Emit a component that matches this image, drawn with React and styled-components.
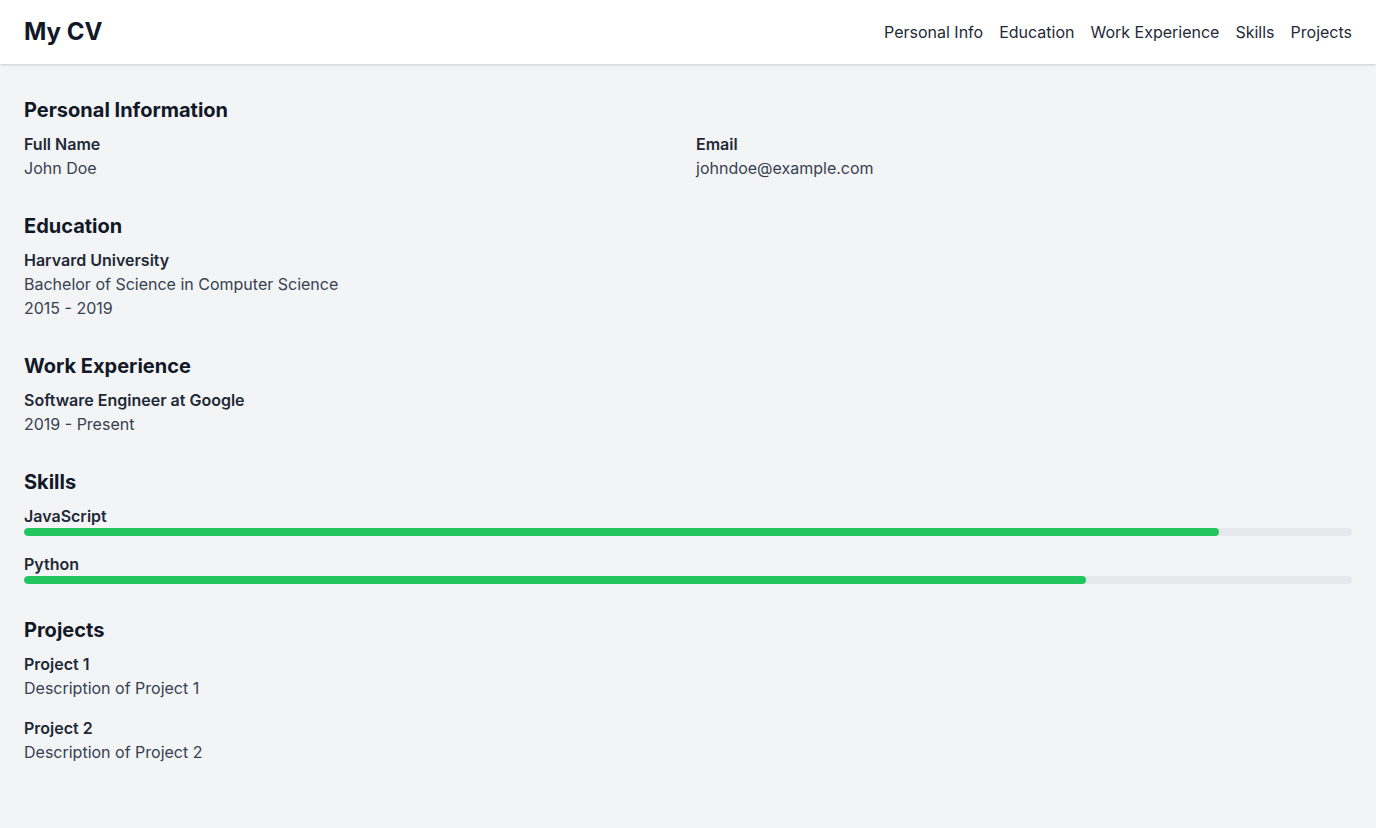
import styled, { createGlobalStyle } from "styled-components"

const GlobalStyle = createGlobalStyle`
  * {
    box-sizing: border-box;
  }
  body {
    margin: 0;
    background: #f3f4f6;
    font-family: Inter, "Noto Sans", sans-serif;
    color: #1f2937;
  }
`

const Page = styled.div`
  min-height: 100vh;
  background: #f3f4f6;
`

const Header = styled.header`
  height: 64px;
  background: #ffffff;
  box-shadow: 0 1px 3px rgba(0, 0, 0, 0.1), 0 1px 2px rgba(0, 0, 0, 0.06);
  display: flex;
  align-items: center;
  justify-content: space-between;
  padding: 0 24px;
`

const Logo = styled.h1`
  margin: 0;
  font-size: 24px;
  line-height: 32px;
  font-weight: 700;
  color: #111827;
`

const Nav = styled.nav`
  display: flex;
  gap: 16px;
`

const NavLink = styled.a`
  font-size: 16px;
  line-height: 24px;
  color: #1f2937;
  text-decoration: none;
  cursor: pointer;
`

const Main = styled.main`
  padding: 32px 24px;
`

const Section = styled.section`
  margin-bottom: 32px;
`

const SectionTitle = styled.h2`
  margin: 0 0 8px;
  font-size: 20px;
  line-height: 28px;
  font-weight: 700;
  color: #111827;
`

const Grid = styled.div`
  display: grid;
  grid-template-columns: 1fr 1fr;
  gap: 16px;
`

const Label = styled.div`
  font-size: 16px;
  line-height: 24px;
  font-weight: 600;
  color: #1f2937;
`

const Text = styled.div`
  font-size: 16px;
  line-height: 24px;
  color: #374151;
`

const Item = styled.div`
  & + & {
    margin-top: 16px;
  }
`

const Track = styled.div`
  height: 8px;
  border-radius: 9999px;
  background: #e5e7eb;
  overflow: hidden;
`

const Fill = styled.div`
  height: 100%;
  border-radius: 9999px;
  background: #22c55e;
`

const links = ["Personal Info", "Education", "Work Experience", "Skills", "Projects"]

const skills = [
  { name: "JavaScript", level: 90 },
  { name: "Python", level: 80 },
]

const projects = [
  { name: "Project 1", description: "Description of Project 1" },
  { name: "Project 2", description: "Description of Project 2" },
]

export default function App() {
  return (
    <Page>
      <GlobalStyle />
      <Header>
        <Logo>My CV</Logo>
        <Nav>
          {links.map((link) => (
            <NavLink key={link}>{link}</NavLink>
          ))}
        </Nav>
      </Header>
      <Main>
        <Section>
          <SectionTitle>Personal Information</SectionTitle>
          <Grid>
            <div>
              <Label>Full Name</Label>
              <Text>John Doe</Text>
            </div>
            <div>
              <Label>Email</Label>
              <Text>johndoe@example.com</Text>
            </div>
          </Grid>
        </Section>

        <Section>
          <SectionTitle>Education</SectionTitle>
          <Label>Harvard University</Label>
          <Text>Bachelor of Science in Computer Science</Text>
          <Text>2015 - 2019</Text>
        </Section>

        <Section>
          <SectionTitle>Work Experience</SectionTitle>
          <Label>Software Engineer at Google</Label>
          <Text>2019 - Present</Text>
        </Section>

        <Section>
          <SectionTitle>Skills</SectionTitle>
          {skills.map((skill) => (
            <Item key={skill.name}>
              <Label>{skill.name}</Label>
              <Track>
                <Fill style={{ width: `${skill.level}%` }} />
              </Track>
            </Item>
          ))}
        </Section>

        <Section>
          <SectionTitle>Projects</SectionTitle>
          {projects.map((project) => (
            <Item key={project.name}>
              <Label>{project.name}</Label>
              <Text>{project.description}</Text>
            </Item>
          ))}
        </Section>
      </Main>
    </Page>
  )
}
